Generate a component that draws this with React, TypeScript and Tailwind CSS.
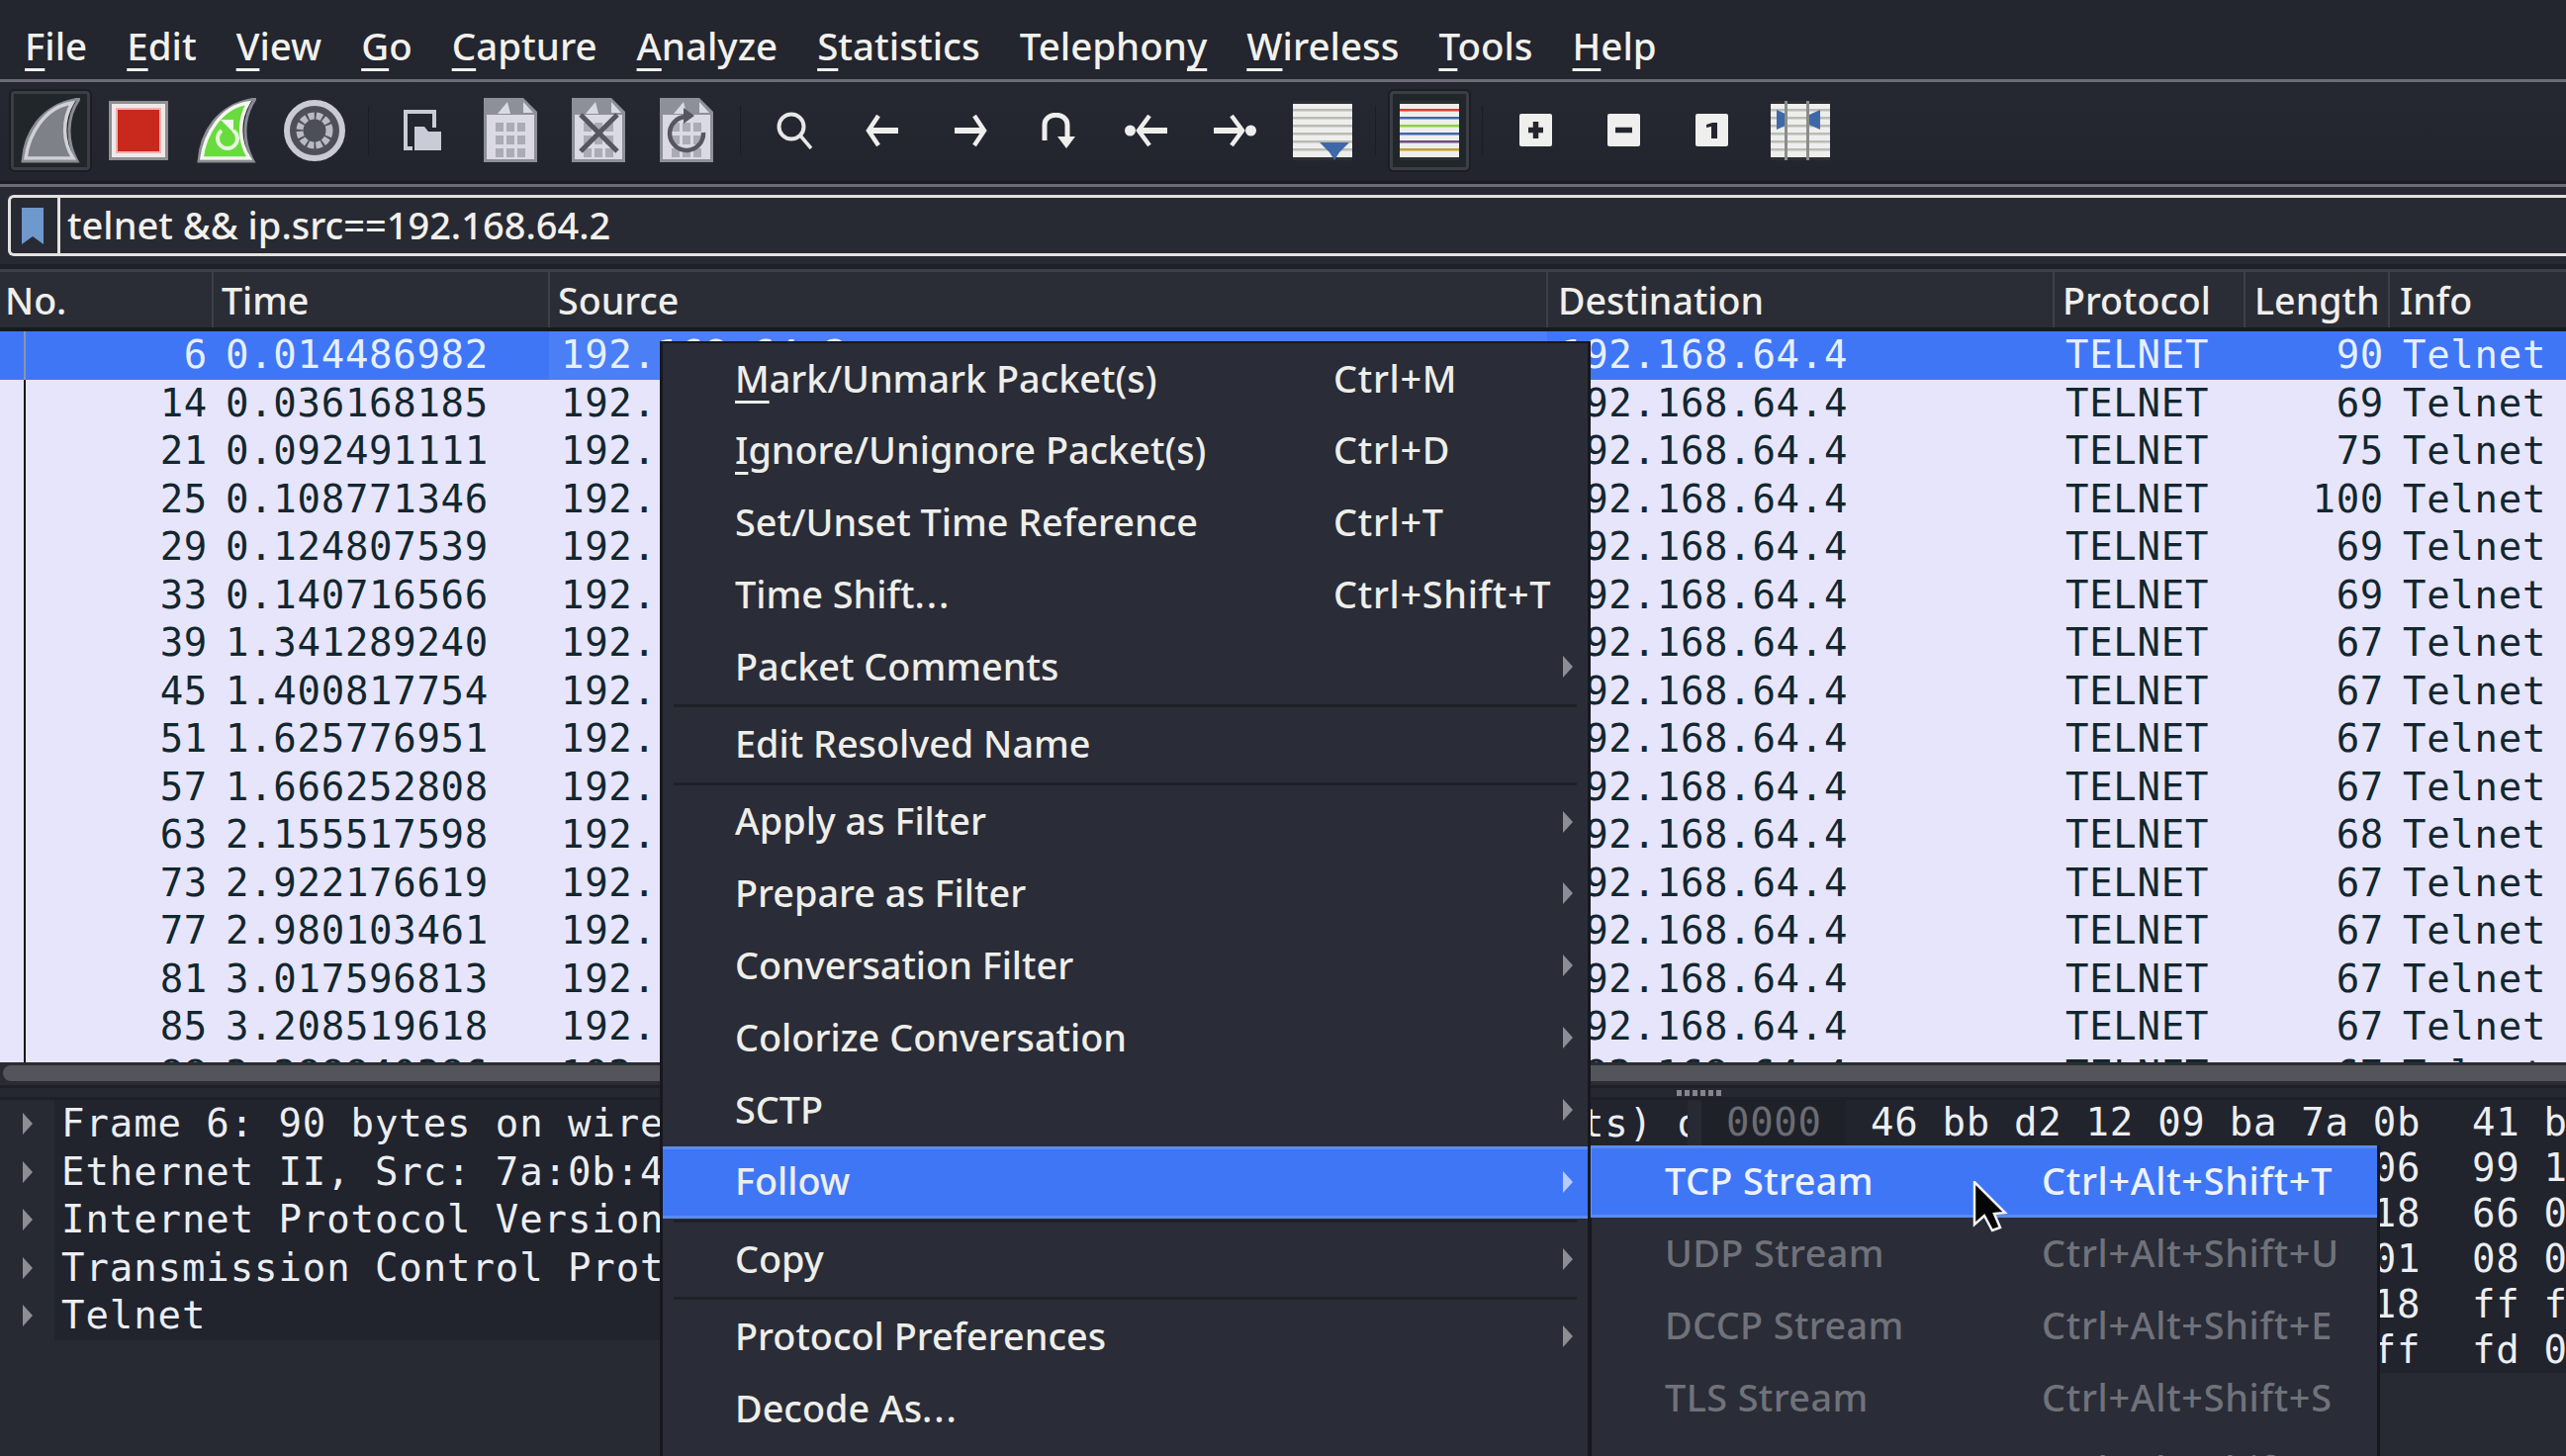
import type { ReactNode } from "react";

const sans = "font-['Noto_Sans',sans-serif] font-medium";
const mono = "font-['DejaVu_Sans_Mono',monospace]";

const menus: [string, string, string][] = [
  ["", "F", "ile"],
  ["", "E", "dit"],
  ["", "V", "iew"],
  ["", "G", "o"],
  ["", "C", "apture"],
  ["", "A", "nalyze"],
  ["", "S", "tatistics"],
  ["Telephon", "y", ""],
  ["", "W", "ireless"],
  ["", "T", "ools"],
  ["", "H", "elp"],
];

const packets: [string, string, string][] = [
  ["6", "0.014486982", "90"],
  ["14", "0.036168185", "69"],
  ["21", "0.092491111", "75"],
  ["25", "0.108771346", "100"],
  ["29", "0.124807539", "69"],
  ["33", "0.140716566", "69"],
  ["39", "1.341289240", "67"],
  ["45", "1.400817754", "67"],
  ["51", "1.625776951", "67"],
  ["57", "1.666252808", "67"],
  ["63", "2.155517598", "68"],
  ["73", "2.922176619", "67"],
  ["77", "2.980103461", "67"],
  ["81", "3.017596813", "67"],
  ["85", "3.208519618", "67"],
  ["88", "3.288840386", "67"],
];

const details = [
  "Frame 6: 90 bytes on wire (720 bits), 90 bytes captured (720 bits) on interface",
  "Ethernet II, Src: 7a:0b:41:b2:6c:10",
  "Internet Protocol Version 4, Src: 192.168.64.2",
  "Transmission Control Protocol, Src Port: 23",
  "Telnet",
];

const hexRows: [string, string, string][] = [
  ["0000", "46 bb d2 12 09 ba 7a 0b", "41 bb"],
  ["0010", "00 4c 40 5e 40 00 40 06", "99 1c"],
  ["0020", "40 04 00 17 c2 7e 1a 18", "66 02"],
  ["0030", "01 fd 22 10 00 00 01 01", "08 0a"],
  ["0040", "3f 4e ff fb 01 ff fb 18", "ff fb"],
  ["0050", "00 fb 1f ff fb 20 ff ff", "fd 03"],
];

function Triangle({ color = "#8d8e93" }: { color?: string }) {
  return (
    <svg width="12" height="22" viewBox="0 0 12 22">
      <path d="M1 0 L11 11 L1 22 Z" fill={color} />
    </svg>
  );
}

function Fin({ fill, stroke, children }: { fill: string; stroke: string; children?: ReactNode }) {
  return (
    <svg width="60" height="66" viewBox="0 0 60 66">
      <path d="M2 64 C4 36 20 7 59 1 C46 20 46 44 57 64 Z" fill="none" stroke="#8b8c92" strokeWidth="3" />
      <path d="M5 61 C8 37 24 9 52 5 C42 22 42 44 53 61 Z" fill={fill} stroke={stroke} strokeWidth="3.5" />
      {children}
    </svg>
  );
}

function StopIcon() {
  return (
    <svg width="60" height="60" viewBox="0 0 60 60">
      <rect x="1.5" y="1.5" width="57" height="57" fill="#efe9e9" stroke="#8f8f90" strokeWidth="3" />
      <rect x="8" y="8" width="44" height="44" fill="#c9291c" stroke="#eab4ae" strokeWidth="2" />
    </svg>
  );
}

function GearIcon() {
  return (
    <svg width="64" height="66" viewBox="0 0 64 66">
      <circle cx="32" cy="33" r="28" fill="#4d4f58" stroke="#c9cad2" strokeWidth="6" />
      <circle cx="32" cy="33" r="15" fill="#50525b" stroke="#b9bac2" strokeWidth="7" strokeDasharray="6 2" />
      <circle cx="32" cy="33" r="11" fill="#4d4f58" />
    </svg>
  );
}

function OpenIcon() {
  return (
    <svg width="38" height="42" viewBox="0 0 38 42">
      <path d="M9 39 H2 V2 H31 V18" fill="none" stroke="#c9ccd6" strokeWidth="4" />
      <path d="M11 17 H21 L25 22 H38 V41 H11 Z" fill="#c9ccd6" />
    </svg>
  );
}

function FileIcon({ children }: { children?: ReactNode }) {
  const dots = [];
  for (let r = 0; r < 3; r++) {
    for (let c = 0; c < 3; c++) {
      dots.push(<rect key={`${r}-${c}`} x={12 + c * 11} y={25 + r * 13} width="8" height="9" fill="#a9abb5" />);
    }
  }
  return (
    <svg width="54" height="65" viewBox="0 0 54 65">
      <path d="M0 0 H18 L28 0 H40 L54 14 V65 H0 Z" fill="#8e9099" />
      <path d="M3 17 H51 V62 H3 Z" fill="#d9dae3" />
      <path d="M14 16 L24 4 L27 16 Z" fill="#d9dae3" />
      <path d="M40 4 L50 15 H40 Z" fill="#d9dae3" />
      {dots}
      {children}
    </svg>
  );
}

function SearchIcon() {
  return (
    <svg width="38" height="38" viewBox="0 0 38 38">
      <circle cx="16" cy="15" r="12.5" fill="none" stroke="#e7e7e5" strokeWidth="4" />
      <path d="M25 24 L36 37" stroke="#e7e7e5" strokeWidth="3.5" />
    </svg>
  );
}

function ArrowIcon({ flip, dot }: { flip?: boolean; dot?: boolean }) {
  return (
    <svg width="44" height="34" viewBox="0 0 44 34" style={flip ? { transform: "scaleX(-1)" } : undefined}>
      {dot && <circle cx="5.5" cy="17" r="5.5" fill="#eeeeec" />}
      <path d={dot ? "M25 2 L14 17 L25 32" : "M18 2 L8 17 L18 32"} fill="none" stroke="#eeeeec" strokeWidth="4.5" />
      <path d={dot ? "M15 17 H43" : "M8 17 H38"} stroke="#eeeeec" strokeWidth="6" />
    </svg>
  );
}

function JumpIcon() {
  return (
    <svg width="34" height="36" viewBox="0 0 34 36">
      <path d="M3 28 V12 C3 -1 26 -1 26 12 V24" fill="none" stroke="#eeeeec" strokeWidth="5" />
      <path d="M16 24 H34 L25 36 Z" fill="#eeeeec" />
    </svg>
  );
}

function ListIcon({ lines, children }: { lines: string[]; children?: ReactNode }) {
  return (
    <svg width="60" height="60" viewBox="0 0 60 60">
      <rect width="60" height="60" fill="#2b3032" />
      <rect y="3" width="60" height="54" fill="#eeeeec" />
      {lines.map((c, i) => (
        <rect key={i} y={8 + i * 8} width="60" height="2.5" fill={c} />
      ))}
      {children}
    </svg>
  );
}

function ZoomBox({ children }: { children: ReactNode }) {
  return (
    <svg width="33" height="33" viewBox="0 0 33 33">
      <rect width="33" height="33" rx="2" fill="#efefed" />
      {children}
    </svg>
  );
}

const grey = "#babbb4";
const greyLines = [grey, grey, grey, grey, grey, grey];

function Slot({ active, children }: { active?: boolean; children: ReactNode }) {
  return (
    <div className="w-[89px] h-[80px] flex items-center justify-center">
      <div
        className={
          active
            ? "w-[80px] h-[80px] flex items-center justify-center rounded-[4px] border-[3px] border-[#3b3e45] bg-[#20262a] shadow-[0_0_0_2px_#1c1d25]"
            : "flex items-center justify-center"
        }
      >
        {children}
      </div>
    </div>
  );
}

function ToolSep({ narrow }: { narrow?: boolean }) {
  return (
    <div className={`${narrow ? "w-[19px]" : "w-[20px]"} flex justify-center`}>
      <div className="w-[1px] h-[50px] bg-[#1b1d24]" />
    </div>
  );
}

function Toolbar() {
  return (
    <div className="h-[103px] flex items-center pl-[6px] pb-[3px] border-b-[3px] border-[#1c1d24] bg-gradient-to-b from-[#252731] to-[#22252e]">
      <Slot active>
        <Fin fill="#7f8188" stroke="#cfd0d8" />
      </Slot>
      <Slot>
        <StopIcon />
      </Slot>
      <Slot>
        <Fin fill="#68dc3e" stroke="#f4f6f0">
          <path d="M37 33 A10 10 0 1 1 25 33" fill="none" stroke="#e6f5dc" strokeWidth="4" />
          <path d="M24 22 H37 V35 Z" fill="#f4f6f0" />
        </Fin>
      </Slot>
      <Slot>
        <GearIcon />
      </Slot>
      <ToolSep />
      <Slot>
        <OpenIcon />
      </Slot>
      <Slot>
        <FileIcon />
      </Slot>
      <Slot>
        <FileIcon>
          <path d="M9 17 L46 54 M46 17 L9 54" stroke="#55565e" strokeWidth="5" />
        </FileIcon>
      </Slot>
      <Slot>
        <FileIcon>
          <path d="M44 35 A17 17 0 1 1 26 19" fill="none" stroke="#55565e" strokeWidth="4.5" />
          <path d="M24 10 L35 18 L24 26 Z" fill="#55565e" />
        </FileIcon>
      </Slot>
      <ToolSep />
      <Slot>
        <SearchIcon />
      </Slot>
      <Slot>
        <ArrowIcon />
      </Slot>
      <Slot>
        <ArrowIcon flip />
      </Slot>
      <Slot>
        <JumpIcon />
      </Slot>
      <Slot>
        <ArrowIcon dot />
      </Slot>
      <Slot>
        <ArrowIcon dot flip />
      </Slot>
      <Slot>
        <ListIcon lines={greyLines}>
          <path d="M27 42 H57 L47 52 L42 60 L37 52 Z" fill="#3f68ab" />
        </ListIcon>
      </Slot>
      <ToolSep narrow />
      <Slot active>
        <ListIcon lines={["#e2392f", "#3f68ab", "#8ad33a", "#3f68ab", "#6f4e7e", "#bf9f32"]} />
      </Slot>
      <ToolSep narrow />
      <Slot>
        <ZoomBox>
          <path d="M9 16.5 H24 M16.5 8 V25" stroke="#24262f" strokeWidth="5.5" />
        </ZoomBox>
      </Slot>
      <Slot>
        <ZoomBox>
          <path d="M8 16.5 H25" stroke="#24262f" strokeWidth="5.5" />
        </ZoomBox>
      </Slot>
      <Slot>
        <ZoomBox>
          <path d="M11 11 L17 9 H22 V25 H16 V13 L11 14 Z" fill="#24262f" />
        </ZoomBox>
      </Slot>
      <Slot>
        <ListIcon lines={greyLines}>
          <path d="M6 9 L17 14 V24 L6 29 Z M50 9 L39 14 V24 L50 29 Z" fill="#3f68ab" />
          <rect x="14" width="3" height="60" fill="#8b8d88" />
          <rect x="36" width="3" height="60" fill="#8b8d88" />
        </ListIcon>
      </Slot>
    </div>
  );
}

function FilterBar() {
  return (
    <div className="h-[78px] pt-[8px] pl-[8px] bg-[#282a33]">
      <div className="h-[62px] flex items-center border-[3px] border-r-0 border-[#e4e2de] rounded-l-[6px]">
        <div className="w-[50px] h-full flex items-center justify-center pr-[3px] border-r-[3px] border-[#e4e2de]">
          <svg width="22" height="37" viewBox="0 0 22 37">
            <path d="M0 0 H22 V37 L11 29 L0 37 Z" fill="#6f98cd" />
          </svg>
        </div>
        <span className={`${sans} pl-[7px] pb-[2px] text-[38px] leading-none text-[#f2f0ec]`}>telnet &amp;&amp; ip.src==192.168.64.2</span>
      </div>
    </div>
  );
}

const headers: [string, string][] = [
  ["No.", "w-[216px] pl-[5px]"],
  ["Time", "w-[340px] pl-[8px]"],
  ["Source", "w-[1009px] pl-[8px]"],
  ["Destination", "w-[512px] pl-[10px]"],
  ["Protocol", "w-[193px] pl-[8px]"],
  ["Length", "w-[146px] pl-[9px]"],
  ["Info", "flex-1 pl-[10px]"],
];

function PacketHeader() {
  return (
    <div className="h-[63px] flex border-t-[3px] border-t-[#3d4048] border-b-[4px] border-b-[#191a20] bg-[#2a2d36]">
      {headers.map(([name, cls], i) => (
        <div
          key={name}
          className={`${cls} ${sans} flex items-center pt-[2px] text-[37.6px] text-[#f0efeb] ${i < 6 ? "border-r-[2px] border-[#3d4048]" : ""}`}
        >
          {name}
        </div>
      ))}
    </div>
  );
}

function PacketList() {
  return (
    <div className={`${mono} h-[739px] overflow-hidden bg-[#e7e5fb] text-[39px] tracking-[0.7px] text-[#12272e]`}>
      {packets.map(([no, time, len], i) => {
        const sel = i === 0;
        return (
          <div key={no} className={`h-[48.5px] flex items-center ${sel ? "bg-[#3f76f6] text-[#e6efff]" : ""}`}>
            <div className="w-[215px] h-full pl-[24px] pr-[5px]">
              <div className={`h-full flex items-center justify-end border-l-[2px] ${sel ? "border-[#8a96b0]" : "border-[#12171d]"}`}>{no}</div>
            </div>
            <div className="w-[340px] pl-[13px]">{time}</div>
            <div className={`w-[1009px] h-full flex items-center pl-[12px] ${sel ? "bg-[#4a7ff5]" : ""}`}>192.168.64.2</div>
            <div className="w-[512px] pl-[14px]">192.168.64.4</div>
            <div className="w-[193px] pl-[12px]">TELNET</div>
            <div className="w-[146px] pr-[5px] text-right">{len}</div>
            <div className="flex-1 pl-[14px]">Telnet</div>
          </div>
        );
      })}
    </div>
  );
}

function BottomPanes() {
  return (
    <div className="flex h-[360px] bg-[#282a33]">
      <div className={`${mono} w-[1706px] h-[243px] flex overflow-hidden text-[39px] tracking-[0.9px] text-[#eceef2]`}>
        <div className="w-[55px] shrink-0 pl-[22px]">
          {details.map((d) => (
            <div key={d} className="h-[48.5px] flex items-center">
              <Triangle />
            </div>
          ))}
        </div>
        <div className="flex-1 pl-[7px] bg-[#21232d] overflow-hidden">
          {details.map((d) => (
            <div key={d} className="h-[48.5px] flex items-center whitespace-pre">
              {d}
            </div>
          ))}
        </div>
      </div>
      <div className={`${mono} ml-[14px] flex-1 h-[276px] overflow-hidden bg-[#21242d] text-[39px] tracking-[0.7px] text-[#eceef2]`}>
        {hexRows.map(([off, a, b]) => (
          <div key={off} className="h-[46px] flex items-center whitespace-pre">
            <div className="w-[146px] shrink-0 h-full flex items-center pl-[25px] bg-[#1f2129] text-[#6b6d73]">{off}</div>
            <div className="w-[633px] shrink-0 pl-[25px]">{a}</div>
            <div>{b}</div>
          </div>
        ))}
      </div>
    </div>
  );
}

type Item = { label: ReactNode; key?: string; arrow?: boolean; sep?: boolean; hot?: boolean };

function Mn({ children }: { children: ReactNode }) {
  return <span className="underline decoration-[3px] underline-offset-[8px] [text-decoration-skip-ink:none]">{children}</span>;
}

const contextItems: Item[] = [
  { label: <><Mn>M</Mn>ark/Unmark Packet(s)</>, key: "Ctrl+M" },
  { label: <><Mn>I</Mn>gnore/Unignore Packet(s)</>, key: "Ctrl+D" },
  { label: "Set/Unset Time Reference", key: "Ctrl+T" },
  { label: <>Time Shift<span className="tracking-[2px]">...</span></>, key: "Ctrl+Shift+T" },
  { label: "Packet Comments", arrow: true, sep: true },
  { label: "Edit Resolved Name", sep: true },
  { label: "Apply as Filter", arrow: true },
  { label: "Prepare as Filter", arrow: true },
  { label: "Conversation Filter", arrow: true },
  { label: "Colorize Conversation", arrow: true },
  { label: "SCTP", arrow: true },
  { label: "Follow", arrow: true, hot: true, sep: true },
  { label: "Copy", arrow: true, sep: true },
  { label: "Protocol Preferences", arrow: true },
  { label: <>Decode As<span className="tracking-[2px]">...</span></> },
];

const followItems: [string, string][] = [
  ["TCP Stream", "Ctrl+Alt+Shift+T"],
  ["UDP Stream", "Ctrl+Alt+Shift+U"],
  ["DCCP Stream", "Ctrl+Alt+Shift+E"],
  ["TLS Stream", "Ctrl+Alt+Shift+S"],
  ["HTTP Stream", "Ctrl+Alt+Shift+H"],
];

function ContextMenu() {
  return (
    <div className={`${sans} absolute left-[667px] top-[345px] w-[941px] h-[1127px] overflow-hidden border-x-[3px] border-t-[2px] border-[#17181f] bg-[#2a2c37] text-[37.8px] text-[#eeeee9]`}>
      {contextItems.map((it, i) => (
        <div key={i}>
          <div
            className={`h-[72.8px] flex items-center pl-[73px] pb-[1px] ${it.hot ? "-mx-[3px] pl-[76px] pr-[3px] bg-[#3f76f6] border-y-[3px] border-[#5b8bf0]" : ""}`}
          >
            <div className="w-[605px] shrink-0 whitespace-nowrap">{it.label}</div>
            <div className="whitespace-nowrap tracking-[0.7px]">{it.key}</div>
            {it.arrow && (
              <div className="ml-auto mr-[14px] flex">
                <Triangle color={it.hot ? "#b9cbf8" : "#8d8e93"} />
              </div>
            )}
          </div>
          {it.sep && (
            <div className="h-[5.5px] flex items-center mx-[11px]">
              <div className="h-[3px] w-full bg-[#1f2128]" />
            </div>
          )}
        </div>
      ))}
    </div>
  );
}

function FollowMenu() {
  return (
    <div className={`${sans} absolute left-[1608px] top-[1158px] w-[798px] h-[314px] overflow-hidden border-r-[3px] border-[#17181f] bg-[#2a2c37] text-[37.8px] text-[#70727a]`}>
      {followItems.map(([label, key], i) => (
        <div
          key={label}
          className={`h-[73px] flex items-center pl-[74px] border-l-[1px] ${i === 0 ? "-mr-[3px] bg-[#3f76f6] border-y-[3px] border-y-[#5b8bf0] border-l-[#6b96f5] text-[#eef2fb]" : "border-l-[#17181f]"}`}
        >
          <div className="w-[381px] shrink-0 whitespace-nowrap tracking-[0.4px]">{label}</div>
          <div className="whitespace-nowrap tracking-[0.7px]">{key}</div>
        </div>
      ))}
    </div>
  );
}

function Cursor() {
  return (
    <svg className="absolute left-[1994px] top-[1194px]" width="36" height="52" viewBox="0 0 36 52">
      <path d="M2 1 L2 44 L12 35 L20 50 L28 47 L22 33 L33 32 Z" fill="#050505" stroke="#f4f4f4" strokeWidth="2.5" />
    </svg>
  );
}

export default function App() {
  return (
    <div className="relative w-[2594px] h-[1472px] overflow-hidden bg-[#282a33]">
      <div className={`${sans} h-[80px] flex items-center gap-[40px] pl-[25px] pt-[14px] bg-[#23252f] text-[38.5px] text-[#f2f1ec]`}>
        {menus.map(([a, m, b]) => (
          <span key={a + m + b}>
            {a}
            <Mn>{m}</Mn>
            {b}
          </span>
        ))}
      </div>
      <div className="h-[3px] bg-[#6c6c74]" />
      <Toolbar />
      <div className="h-[3px] bg-[#6c6c74]" />
      <FilterBar />
      <div className="h-[5px] bg-[#1e1f27]" />
      <PacketHeader />
      <PacketList />
      <div className="h-[23px] pt-[3px] bg-[#2a2c34]">
        <div className="h-[16px] ml-[3px] rounded-l-[8px] bg-[#54555a]" />
      </div>
      <div className="h-[15px] flex items-center justify-end border-y-[3px] border-[#1e1f27] bg-[#262831]">
        <div className="mr-[854px] flex gap-[3px]">
          {[0, 1, 2, 3, 4, 5].map((d) => (
            <div key={d} className="w-[5px] h-[6px] bg-[#85868c]" />
          ))}
        </div>
      </div>
      <BottomPanes />
      <ContextMenu />
      <FollowMenu />
      <Cursor />
    </div>
  );
}
